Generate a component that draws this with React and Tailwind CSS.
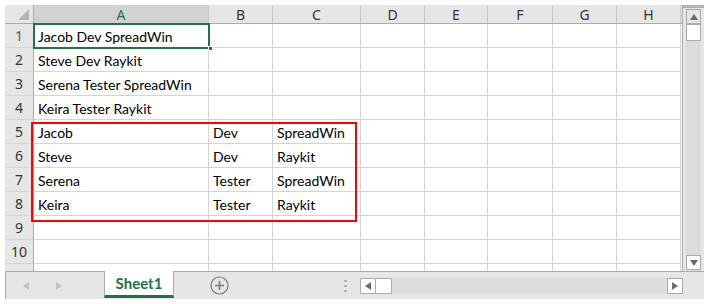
import React from "react";

const cols = [
  { key: "A", w: "w-[175px]" },
  { key: "B", w: "w-[64px]" },
  { key: "C", w: "w-[88px]" },
  { key: "D", w: "w-[64px]" },
  { key: "E", w: "w-[63px]" },
  { key: "F", w: "w-[65px]" },
  { key: "G", w: "w-[64px]" },
  { key: "H", w: "w-[64px]" },
];

const rows = [
  ["Jacob Dev SpreadWin", "", ""],
  ["Steve Dev Raykit", "", ""],
  ["Serena Tester SpreadWin", "", ""],
  ["Keira Tester Raykit", "", ""],
  ["Jacob", "Dev", "SpreadWin"],
  ["Steve", "Dev", "Raykit"],
  ["Serena", "Tester", "SpreadWin"],
  ["Keira", "Tester", "Raykit"],
  ["", "", ""],
  ["", "", ""],
];

function Tri({ dir, className }) {
  const pts = {
    up: "0,6 4,0 8,6",
    down: "0,0 8,0 4,6",
    left: "6,0 6,8 0,4",
    right: "0,0 0,8 6,4",
  }[dir];
  const box = dir === "up" || dir === "down" ? "0 0 8 6" : "0 0 6 8";
  const size = dir === "up" || dir === "down" ? { w: 8, h: 6 } : { w: 6, h: 8 };
  return (
    <svg width={size.w} height={size.h} viewBox={box} className={className}>
      <polygon points={pts} fill="currentColor" />
    </svg>
  );
}

export default function App() {
  return (
    <div className="w-[712px] h-[304px] bg-white pt-[5px] pl-[5px] overflow-hidden font-['Lato','Noto_Sans',sans-serif]">
      <div className="w-[699px] h-[294px] flex flex-col">
        {/* sheet + vertical scrollbar */}
        <div className="flex h-[266px]">
          <div className="relative w-[678px] h-[266px] overflow-hidden border-r border-[#ababab]">
            {/* header row */}
            <div className="flex h-[19px] bg-[#e6e6e6] border-b border-[#ababab]">
              <div className="w-[29px] h-full border-r border-[#ababab] flex items-end justify-end pr-[4px] pb-[3px]">
                <svg width="11" height="11" viewBox="0 0 11 11">
                  <polygon points="11,0 11,11 0,11" fill="#b4b4b4" />
                </svg>
              </div>
              {cols.map((c) => (
                <div
                  key={c.key}
                  className={`${c.w} h-full border-r border-[#c8c8c8] flex items-center justify-center text-[14px] font-['Noto_Sans',sans-serif] ${
                    c.key === "A" ? "bg-[#d2d2d2] text-[#217346]" : "text-[#333]"
                  }`}
                >
                  {c.key}
                </div>
              ))}
            </div>

            {/* rows */}
            {[...rows, ["", "", ""]].map((r, i) => (
              <div key={i} className="flex h-[24px]">
                <div
                  className={`w-[29px] h-full bg-[#e6e6e6] border-r border-[#ababab] border-b border-b-[#d4d4d4] flex items-center justify-center text-[14px] font-['Noto_Sans',sans-serif] ${
                    i === 0 ? "text-[#217346] bg-[#d2d2d2]" : "text-[#333]"
                  }`}
                >
                  {i < 10 ? i + 1 : ""}
                </div>
                {cols.map((c, j) => (
                  <div
                    key={c.key}
                    className={`${c.w} h-full border-r border-b border-[#d4d4d4] flex items-center pl-[4px] pt-[2px] text-[14px] text-black whitespace-nowrap`}
                  >
                    {j < 3 ? r[j] : ""}
                  </div>
                ))}
              </div>
            ))}

            {/* selected cell A1 */}
            <div className="absolute left-[28px] top-[18px] w-[177px] h-[26px] border-2 border-[#217346]" />
            <div className="absolute left-[203px] top-[41px] w-[5px] h-[5px] bg-[#217346] border border-white" />

            {/* red highlight */}
            <div className="absolute left-[26px] top-[117px] w-[326px] h-[100px] border-2 border-[#ff0000]" />
          </div>

          {/* vertical scrollbar */}
          <div className="w-[21px] h-full bg-[#e6e6e6] flex flex-col items-center">
            <div className="w-[21px] h-[3px] bg-[#c6c6c6] border border-[#ababab]" />
            <div className="w-[15px] h-[15px] mt-[1px] bg-[#e6e6e6] border border-[#ababab] flex items-center justify-center text-[#6b6b6b]">
              <Tri dir="up" />
            </div>
            <div className="w-[15px] flex-1 bg-[#dcdcdc] flex flex-col items-center">
              <div className="w-[15px] h-[17px] bg-white border border-[#ababab]" />
              <div className="flex-1" />
              <div className="w-[15px] h-[15px] mb-[1px] bg-white border border-[#ababab] flex items-center justify-center text-[#6b6b6b]">
                <Tri dir="down" />
              </div>
            </div>
          </div>
        </div>

        {/* bottom bar */}
        <div className="flex h-[28px] bg-[#e6e6e6] border-t border-[#ababab]">
          <div className="w-[99px] h-full border-l border-[#ababab] flex items-center pl-[17px] gap-[27px] text-[#c0c0c0]">
            <Tri dir="left" />
            <Tri dir="right" />
          </div>
          <div className="w-[70px] h-[27px] -mt-px bg-white border-x border-[#ababab] border-b-[3px] border-b-[#217346] flex items-center justify-center text-[15px] font-bold text-[#217346]">
            Sheet1
          </div>
          <div className="w-[90px] h-full flex items-center justify-center">
            <svg width="19" height="19" viewBox="0 0 19 19">
              <circle cx="9.5" cy="9.5" r="8.5" fill="none" stroke="#7a7a7a" strokeWidth="1.2" />
              <path d="M9.5 5v9M5 9.5h9" stroke="#7a7a7a" strokeWidth="1.6" />
            </svg>
          </div>
          <div className="w-[96px] h-full flex items-center pl-[80px]">
            <svg width="3" height="12" viewBox="0 0 3 12">
              <rect x="0.5" y="0" width="2" height="2" fill="#9a9a9a" />
              <rect x="0.5" y="5" width="2" height="2" fill="#9a9a9a" />
              <rect x="0.5" y="10" width="2" height="2" fill="#9a9a9a" />
            </svg>
          </div>
          <div className="w-[323px] h-full flex items-center">
            <div className="w-full h-[16px] bg-[#dcdcdc] flex">
              <div className="w-[16px] h-full bg-white border border-[#ababab] flex items-center justify-center text-[#6b6b6b]">
                <Tri dir="left" />
              </div>
              <div className="w-[16px] h-full bg-white border-y border-r border-[#ababab]" />
              <div className="flex-1" />
              <div className="w-[16px] h-full bg-white border border-[#ababab] flex items-center justify-center text-[#6b6b6b]">
                <Tri dir="right" />
              </div>
            </div>
          </div>
          <div className="flex-1" />
        </div>
      </div>
    </div>
  );
}
